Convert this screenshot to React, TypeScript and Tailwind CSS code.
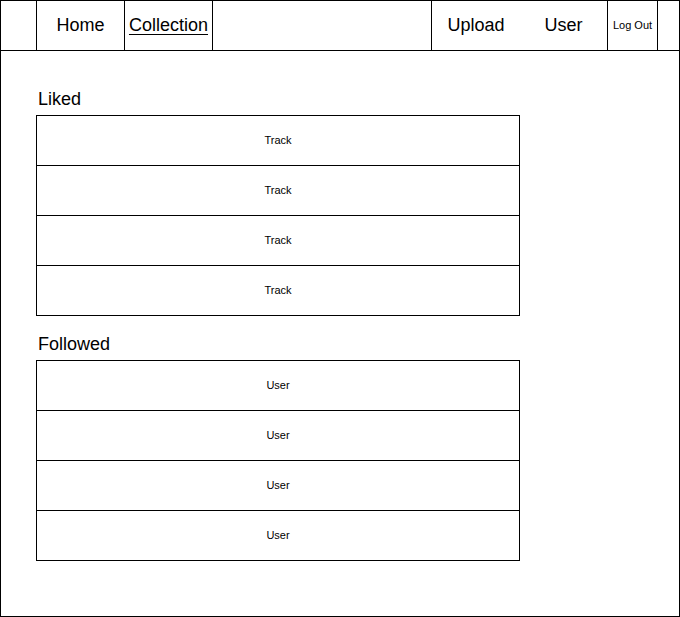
const liked = ["Track", "Track", "Track", "Track"];
const followed = ["User", "User", "User", "User"];

const ListBox = ({ items }: { items: string[] }) => (
    <div className="w-[484px] border-x border-t border-black">
        {items.map((item, i) => (
            <div key={i} className="h-[50px] border-b border-black flex items-center justify-center text-[11px]">
                {item}
            </div>
        ))}
    </div>
);

const Section = ({ title, items }: { title: string; items: string[] }) => (
    <div className="flex flex-col">
        <div className="h-[20px] leading-[20px] text-[18px] pl-[2px] mb-[6px]">{title}</div>
        <ListBox items={items} />
    </div>
);

export default function App() {
    return (
        <div
            className="w-[680px] h-[617px] border border-black bg-white text-black flex flex-col"
            style={{ fontFamily: '"Liberation Sans", Arial, sans-serif' }}
        >
            {/* Top navigation */}
            <nav className="h-[50px] shrink-0 border-b border-black flex text-[18px]">
                <div className="w-[36px] border-r border-black" />
                <div className="w-[88px] border-r border-black flex items-center justify-center">Home</div>
                <div className="w-[88px] border-r border-black flex items-center justify-center underline underline-offset-[3px]">
                    Collection
                </div>
                <div className="flex-1 border-r border-black" />
                <div className="w-[88px] flex items-center justify-center">Upload</div>
                <div className="w-[88px] border-r border-black flex items-center justify-center">User</div>
                <div className="w-[50px] border-r border-black flex items-center justify-center text-[11px]">Log Out</div>
                <div className="w-[21px]" />
            </nav>

            {/* Content */}
            <main className="pl-[35px] pt-[38px] flex flex-col gap-[18px]">
                <Section title="Liked" items={liked} />
                <Section title="Followed" items={followed} />
            </main>
        </div>
    );
}
